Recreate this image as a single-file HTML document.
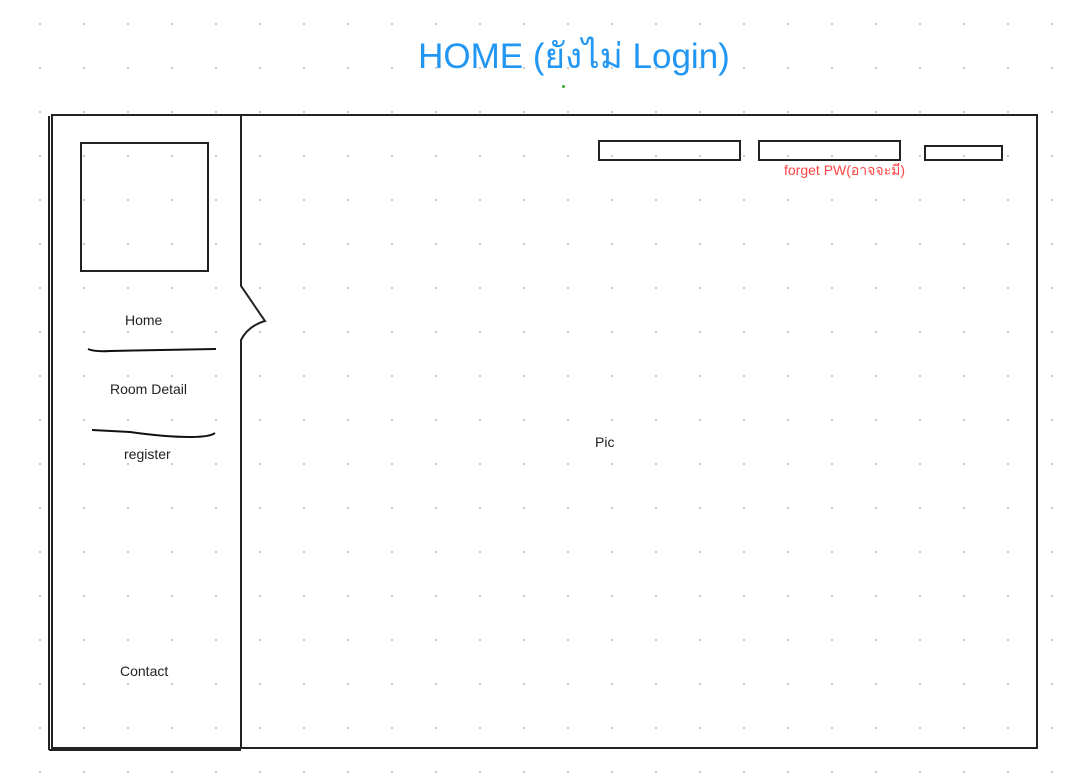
<!DOCTYPE html>
<html><head><style>
body{margin:0;width:1074px;height:781px;overflow:hidden;background:#fff;
background-image:radial-gradient(circle,#c8c8c8 1px,transparent 1.3px);background-size:44px 44px;background-position:18px 2px;font-family:"Liberation Sans","Noto Sans CJK SC",sans-serif;position:relative}
.a{position:absolute}
.t{font-size:14px;color:#222}
</style></head><body>
<div class="a" style="left:0;width:1148px;top:29px;text-align:center;font-size:35px;color:#2196f3;font-family:'Liberation Sans','Noto Sans CJK SC','WenQuanYi Zen Hei',sans-serif">HOME (ยังไม่ Login)</div>
<div class="a" style="left:562px;top:85px;width:3px;height:3px;background:#3a3;border-radius:50%"></div>
<svg class="a" style="left:0;top:0" width="1074" height="781">
<g fill="none" stroke="#222" stroke-width="2">
<rect x="52" y="115" width="985" height="633"/>
<line x1="49" y1="116" x2="49" y2="750"/>
<line x1="49" y1="750" x2="241" y2="750"/>
<rect x="81" y="143" width="127" height="128"/>
<rect x="599" y="141" width="141" height="19"/>
<rect x="759" y="141" width="141" height="19"/>
<rect x="925" y="146" width="77" height="14"/>
</g>
<path d="M241 115 V286 L265 321 Q248 326 241 340 V749" fill="#fff" stroke="#222" stroke-width="2"/>
<path d="M88 349 Q95 352 110 351 L216 349" fill="none" stroke="#111" stroke-width="2"/>
<path d="M92 430 L130 432 Q165 437 190 437 Q210 437 215 433" fill="none" stroke="#111" stroke-width="2"/>
</svg>
<div class="a t" style="left:125px;top:312px">Home</div>
<div class="a t" style="left:110px;top:381px">Room Detail</div>
<div class="a t" style="left:124px;top:446px">register</div>
<div class="a t" style="left:120px;top:663px">Contact</div>
<div class="a t" style="left:595px;top:434px">Pic</div>
<div class="a" style="left:784px;top:160px;font-size:14px;color:#f44;font-family:'Liberation Sans','Noto Sans CJK SC','WenQuanYi Zen Hei',sans-serif">forget PW(อาจจะมี)</div>
</body></html>
